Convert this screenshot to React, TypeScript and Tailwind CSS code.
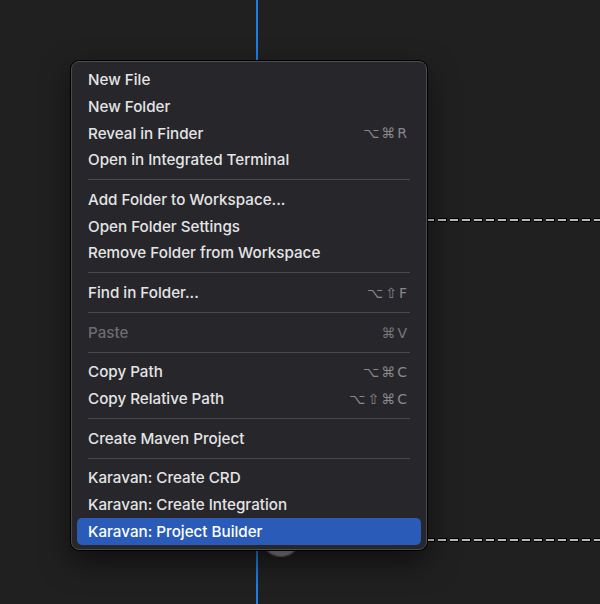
type Item = { label: string; keys?: string; disabled?: boolean; active?: boolean };

const groups: Item[][] = [
  [
    { label: "New File" },
    { label: "New Folder" },
    { label: "Reveal in Finder", keys: "⌥⌘R" },
    { label: "Open in Integrated Terminal" },
  ],
  [
    { label: "Add Folder to Workspace..." },
    { label: "Open Folder Settings" },
    { label: "Remove Folder from Workspace" },
  ],
  [{ label: "Find in Folder...", keys: "⌥⇧F" }],
  [{ label: "Paste", keys: "⌘V", disabled: true }],
  [
    { label: "Copy Path", keys: "⌥⌘C" },
    { label: "Copy Relative Path", keys: "⌥⇧⌘C" },
  ],
  [{ label: "Create Maven Project" }],
  [
    { label: "Karavan: Create CRD" },
    { label: "Karavan: Create Integration" },
    { label: "Karavan: Project Builder", active: true },
  ],
];

function MenuRow({ item }: { item: Item }) {
  return (
    <div
      className={`flex h-[26.6px] items-center justify-between rounded-[5px] px-[11px] pt-px ${
        item.active ? "bg-[#2a5bb8] text-white" : item.disabled ? "text-[#6c6c70]" : "text-[#e4e4e6]"
      }`}
    >
      <span>{item.label}</span>
      {item.keys && (
        <span
          className={`pr-px tracking-[2px] text-[14px] font-normal ${
            item.disabled ? "text-[#77777b]" : "text-[#88888c]"
          }`}
          style={{ fontFamily: "'DejaVu Sans', sans-serif" }}
        >
          {item.keys}
        </span>
      )}
    </div>
  );
}

export default function App() {
  return (
    <div className="relative h-[604px] w-[600px] overflow-hidden bg-[#202020]">
      {/* canvas behind the menu */}
      <div className="absolute left-[256px] top-0 h-full w-[2px] bg-[#1a7fe6]" />
      <svg className="absolute left-0 top-0" width="600" height="604">
        <line x1="426" y1="220" x2="600" y2="220" stroke="#000" strokeWidth="4" strokeDasharray="9 3" />
        <line x1="426" y1="220" x2="600" y2="220" stroke="#b8b8b8" strokeWidth="2" strokeDasharray="8 4" />
        <line x1="426" y1="540" x2="600" y2="540" stroke="#000" strokeWidth="4" strokeDasharray="9 3" />
        <line x1="426" y1="540" x2="600" y2="540" stroke="#b8b8b8" strokeWidth="2" strokeDasharray="8 4" />
        <circle cx="281" cy="537" r="19.5" fill="#8a8a8c" stroke="#5a5a5c" strokeWidth="1.5" />
      </svg>

      {/* context menu */}
      <div
        className="absolute left-[71px] top-[61px] w-[356px] rounded-[8px] border border-[#4c4c50] bg-[#27272b] px-[5px] pb-[4px] pt-[5px] text-[15.2px] font-medium shadow-[0_0_0_1px_#000,0_12px_30px_rgba(0,0,0,0.55)]"
        style={{ fontFamily: "Inter, 'Noto Sans', sans-serif" }}
      >
        {groups.map((group, gi) => (
          <div key={gi}>
            {gi > 0 && (
              <div className="flex h-[13.17px] items-center px-[11px]">
                <div className="h-px w-full bg-[#4a4a4e]" />
              </div>
            )}
            {group.map((item) => (
              <MenuRow key={item.label} item={item} />
            ))}
          </div>
        ))}
      </div>
    </div>
  );
}
